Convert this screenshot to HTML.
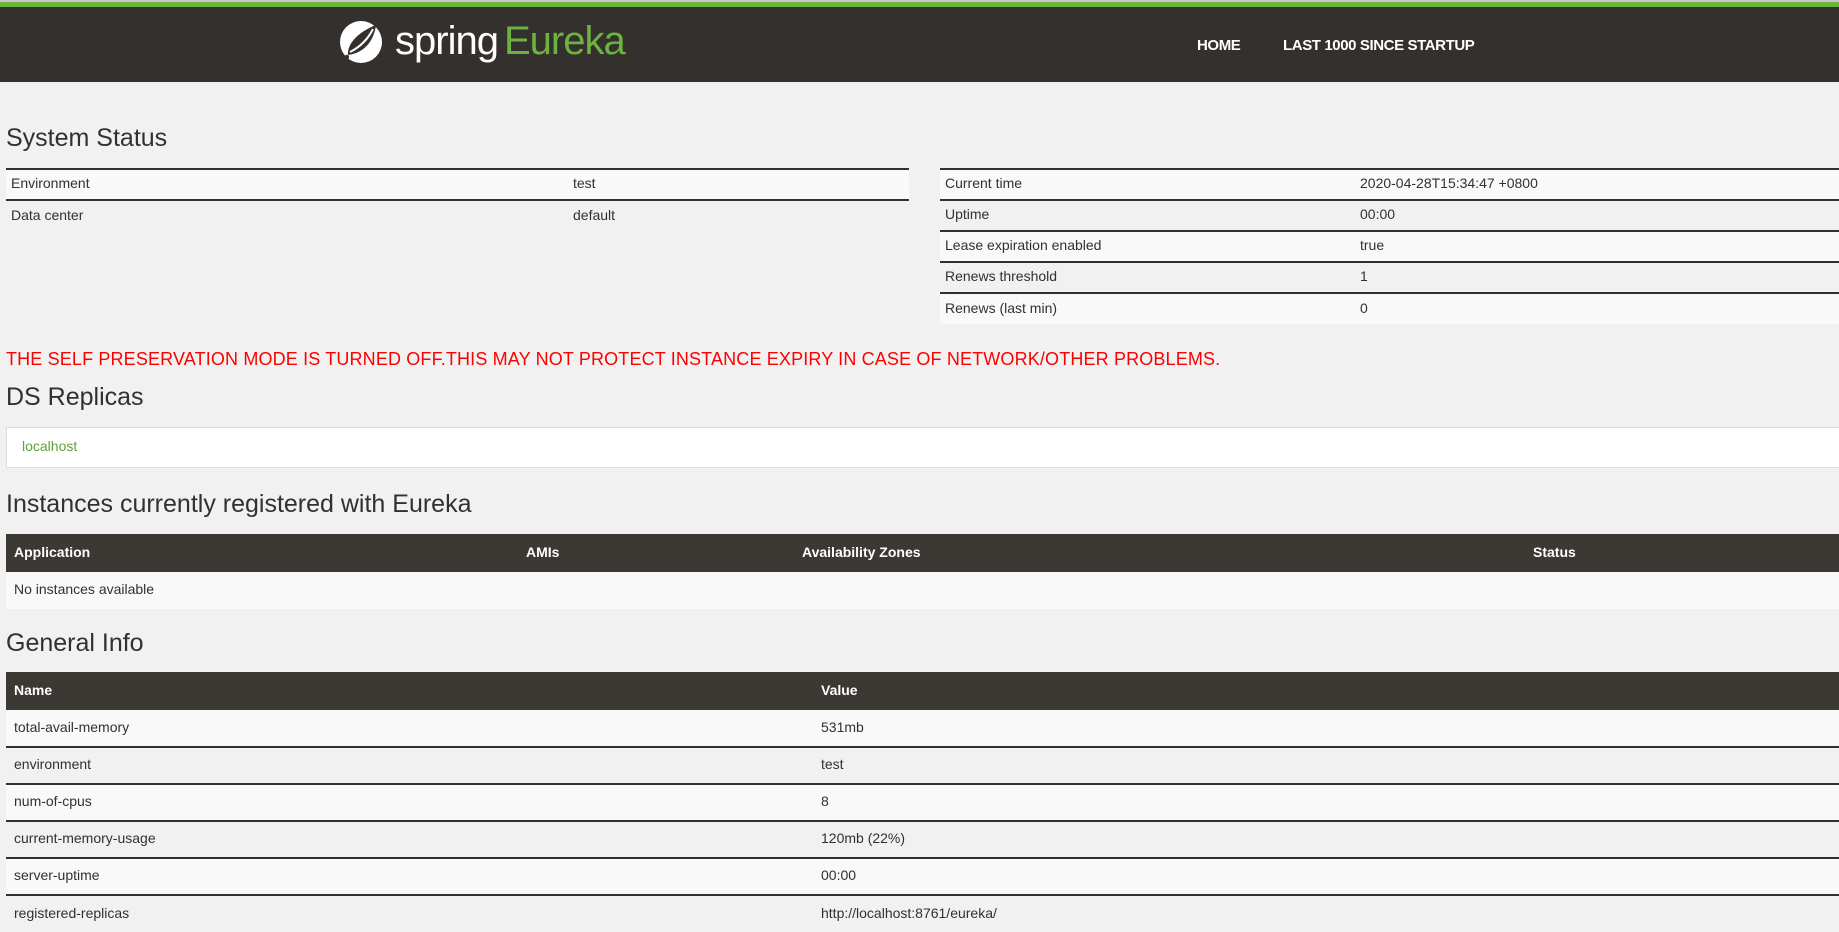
<!DOCTYPE html>
<html><head><meta charset="utf-8"><style>
*{margin:0;padding:0;box-sizing:border-box}
body{width:1839px;height:927px;overflow:hidden;background:#f1f1f1;font-family:"Liberation Sans",sans-serif;color:#34302d;position:relative}
.top{position:absolute;left:0;top:0;width:1839px;height:3px;background:#c8c8c8}
.green{position:absolute;left:0;top:2px;width:1839px;height:5px;background:#6db33f}
.hdr{position:absolute;left:0;top:7px;width:1839px;height:75px;background:#34302d}
.logo{position:absolute;left:395px;top:19px;font-size:40px;color:#fff;letter-spacing:-1px;white-space:nowrap}
.logo span{color:#6db33f;margin-left:6px}
.nav{position:absolute;top:37px;font-size:15px;font-weight:bold;color:#fff;letter-spacing:-0.4px}
h2{position:absolute;left:6px;font-size:25px;font-weight:normal;color:#34302d;white-space:nowrap}
table{position:absolute;border-collapse:collapse;font-size:14px}
td,th{text-align:left;padding:0 6px;white-space:nowrap}
.st td{height:31px;border-top:2px solid #34302d;padding-left:5px;padding-bottom:3px}
.st tr:nth-child(odd){background:#f9f9f9}
.st tr:nth-child(even){background:#f1f1f1}
.warn{position:absolute;left:6px;top:349px;font-size:18px;color:#f00;white-space:nowrap;letter-spacing:0.15px}
.box{position:absolute;left:6px;top:427px;width:1840px;height:41px;background:#fff;border:1px solid #ddd;font-size:14px;color:#5fa134;padding:10px 15px}
.dt th{background:#3c3834;color:#fff;height:38px;font-size:14px;padding-left:8px;padding-bottom:3px}
.dt td{height:37px;padding-left:8px;padding-bottom:3px}
.dt tr.r:nth-child(even){background:#f9f9f9}
.dt tr.r:nth-child(odd){background:#f1f1f1}
.gi td{border-top:2px solid #34302d}
.gi tr.r:nth-child(2) td{border-top:none}
</style></head><body>
<div class="top"></div><div class="green"></div>
<div class="hdr"></div>
<svg style="position:absolute;left:338px;top:19px" width="46" height="46" viewBox="0 0 46 46">
<circle cx="23" cy="23" r="21" fill="#fff"/>
<path d="M38 6 C36 22 26 34 10 36 C9 26 18 14 38 6Z" fill="#34302d"/>
<path d="M35 10 C30 20 22 28 12 33" stroke="#fff" stroke-width="2" fill="none"/>
<circle cx="9" cy="38" r="2.2" fill="#34302d"/>
</svg>
<div class="logo">spring<span>Eureka</span></div>
<div class="nav" style="left:1197px">HOME</div>
<div class="nav" style="left:1283px">LAST 1000 SINCE STARTUP</div>

<h2 style="top:124px">System Status</h2>
<table class="st" style="left:6px;top:168px;width:903px">
<tr><td style="width:562px">Environment</td><td>test</td></tr>
<tr><td>Data center</td><td>default</td></tr>
</table>
<table class="st" style="left:940px;top:168px;width:899px">
<tr><td style="width:415px">Current time</td><td>2020-04-28T15:34:47 +0800</td></tr>
<tr><td>Uptime</td><td>00:00</td></tr>
<tr><td>Lease expiration enabled</td><td>true</td></tr>
<tr><td>Renews threshold</td><td>1</td></tr>
<tr><td>Renews (last min)</td><td>0</td></tr>
</table>

<div class="warn">THE SELF PRESERVATION MODE IS TURNED OFF.THIS MAY NOT PROTECT INSTANCE EXPIRY IN CASE OF NETWORK/OTHER PROBLEMS.</div>
<h2 style="top:383px">DS Replicas</h2>
<div class="box">localhost</div>
<h2 style="top:490px">Instances currently registered with Eureka</h2>
<table class="dt" style="left:6px;top:534px;width:1833px">
<tr><th style="width:512px">Application</th><th style="width:276px">AMIs</th><th style="width:731px">Availability Zones</th><th>Status</th></tr>
<tr class="r"><td colspan="4">No instances available</td></tr>
</table>
<h2 style="top:629px">General Info</h2>
<table class="dt gi" style="left:6px;top:672px;width:1833px">
<tr><th style="width:807px">Name</th><th>Value</th></tr>
<tr class="r"><td>total-avail-memory</td><td>531mb</td></tr>
<tr class="r"><td>environment</td><td>test</td></tr>
<tr class="r"><td>num-of-cpus</td><td>8</td></tr>
<tr class="r"><td>current-memory-usage</td><td>120mb (22%)</td></tr>
<tr class="r"><td>server-uptime</td><td>00:00</td></tr>
<tr class="r"><td>registered-replicas</td><td>http://localhost:8761/eureka/</td></tr>
</table>
</body></html>
